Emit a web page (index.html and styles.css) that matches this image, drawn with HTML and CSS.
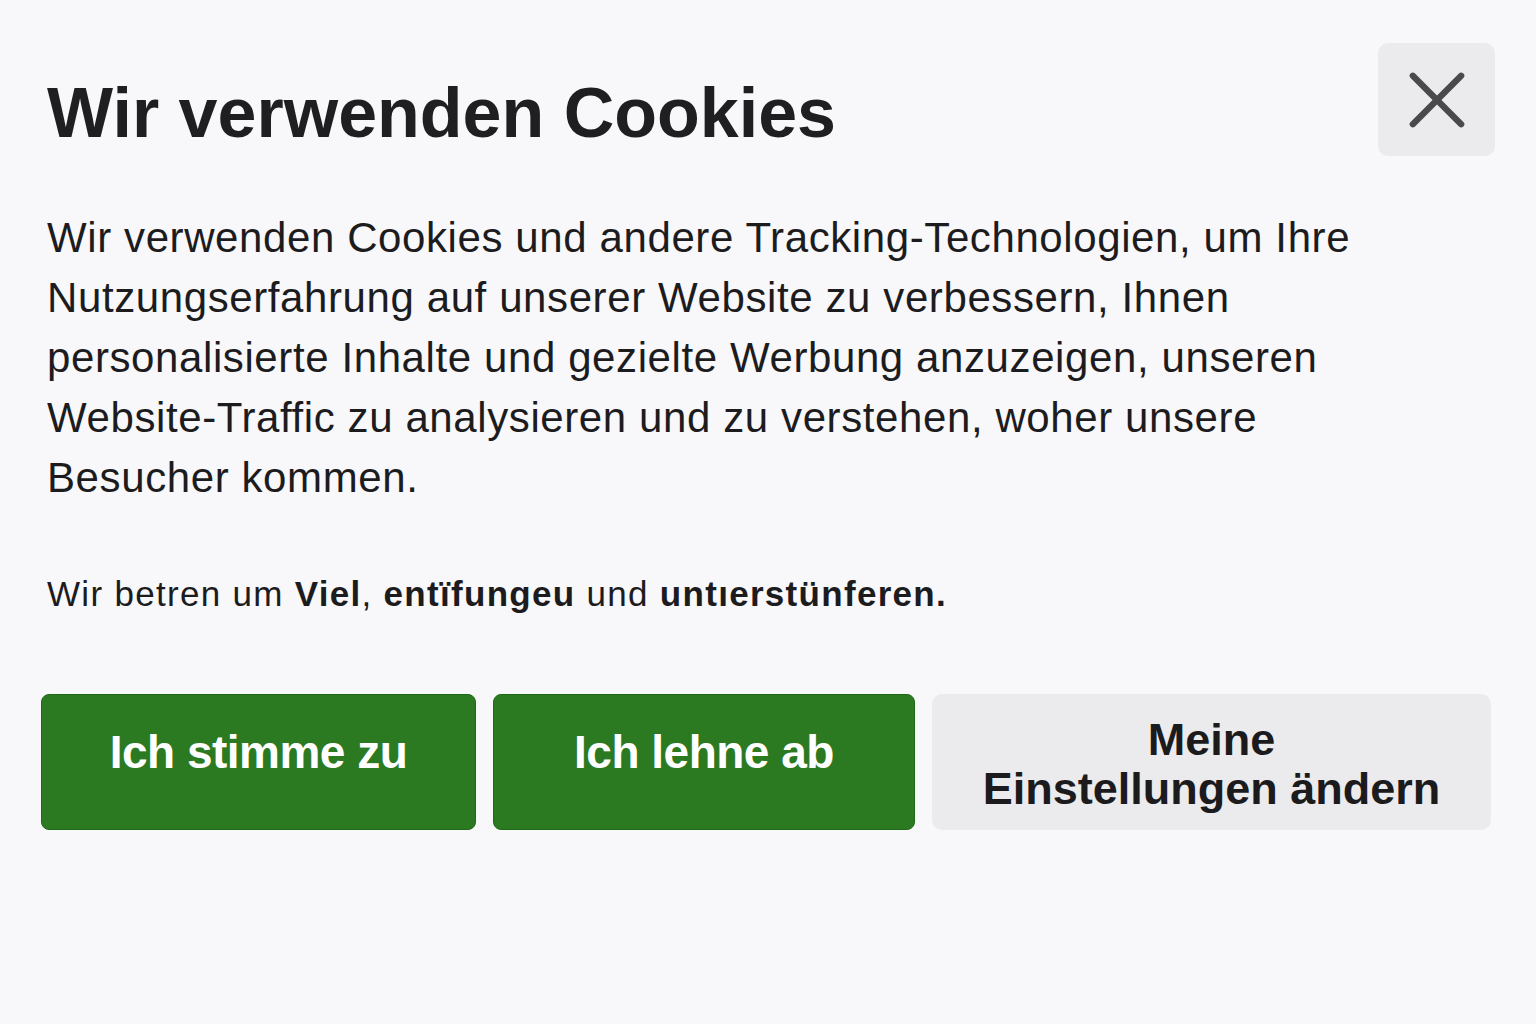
FILE: index.html
```html
<!DOCTYPE html>
<html lang="de">
<head>
<meta charset="utf-8">
<title>Cookie-Hinweis</title>
<link rel="stylesheet" href="styles.css">
</head>
<body>
<section class="consent">
  <header class="consent-head">
    <h1 class="consent-title">Wir verwenden Cookies</h1>
    <button class="close-btn" aria-label="Schließen">
      <svg viewBox="0 0 60 60" width="60" height="60" aria-hidden="true">
        <path d="M5 5 L55 55 M55 5 L5 55" stroke="#4a4a4d" stroke-width="6.5" stroke-linecap="round" fill="none"/>
      </svg>
    </button>
  </header>
  <p class="consent-text">Wir verwenden Cookies und andere Tracking-Technologien, um Ihre<br>Nutzungserfahrung auf unserer Website zu verbessern, Ihnen<br>personalisierte Inhalte und gezielte Werbung anzuzeigen, unseren<br>Website-Traffic zu analysieren und zu verstehen, woher unsere<br>Besucher kommen.</p>
  <p class="consent-note">Wir betren um <b>Viel</b>, <b>entïfungeu</b> und <b>untıerstünferen.</b></p>
  <div class="consent-actions">
    <button class="btn btn-green btn-accept">Ich stimme zu</button>
    <button class="btn btn-green btn-reject">Ich lehne ab</button>
    <button class="btn btn-gray btn-settings">Meine<br>Einstellungen ändern</button>
  </div>
</section>
</body>
</html>
```

FILE: styles.css
```css
html, body {
  margin: 0;
  padding: 0;
  background: #f8f7f9;
}

body {
  width: 1536px;
  height: 1024px;
  overflow: hidden;
  font-family: "Liberation Sans", Arial, sans-serif;
  color: #1c1c1e;
}

.consent {
  padding: 43px 41px 0 41px;
}

.consent-head {
  display: flex;
  justify-content: space-between;
  align-items: flex-start;
}

.consent-title {
  margin: 32px 0 0 6px;
  font-weight: 700;
  font-size: 70px;
  line-height: 76px;
  color: #1f1f21;
}

.close-btn {
  width: 117px;
  height: 113px;
  border: none;
  border-radius: 10px;
  background: #ebeaec;
  display: flex;
  align-items: center;
  justify-content: center;
  padding: 0;
  cursor: pointer;
}

.close-btn svg {
  width: 58px;
  height: 58px;
}

.consent-text {
  margin: 52px 0 0 6px;
  font-size: 42px;
  line-height: 60px;
  letter-spacing: 0.6px;
  color: #1c1c1e;
}

.consent-note {
  margin: 64px 0 0 6px;
  font-size: 35px;
  line-height: 44px;
  letter-spacing: 1.3px;
  color: #1c1c1e;
}

.consent-note b {
  font-weight: 700;
}

.consent-actions {
  display: flex;
  gap: 17px;
  margin-top: 78px;
}

.btn {
  height: 136px;
  border-radius: 8px;
  font-family: "Liberation Sans", Arial, sans-serif;
  font-weight: 700;
  cursor: pointer;
  padding: 0;
}

.btn-green {
  background: #2b7a22;
  border: 1.5px solid #1f6a18;
  color: #ffffff;
  font-size: 46px;
  letter-spacing: -0.5px;
  padding-bottom: 20px;
}

.btn-accept {
  width: 435px;
}

.btn-reject {
  width: 422px;
}

.btn-gray {
  width: 559px;
  background: #ebeaec;
  border: none;
  border-radius: 10px;
  color: #1b1b1d;
  font-size: 45px;
  line-height: 49px;
  padding-top: 4px;
}
```
